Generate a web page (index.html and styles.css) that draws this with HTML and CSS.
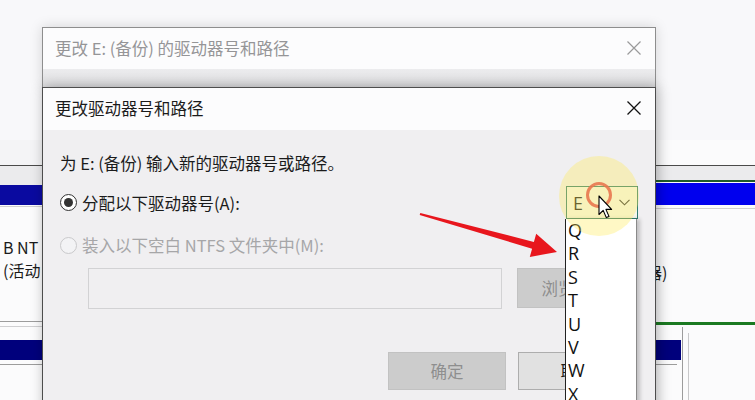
FILE: index.html
```html
<!DOCTYPE html>
<html lang="zh-CN">
<head>
    <meta charset="UTF-8">
    <meta name="viewport" content="width=device-width, initial-scale=1.0">
    <title>更改驱动器号和路径</title>
    <link rel="stylesheet" href="styles.css">
</head>
<body>
    <div class="desktop">

        <!-- Disk Management window behind the dialogs -->
        <div class="disk disk-left">
            <div class="head"></div>
            <div class="rule dark"></div>
            <div class="lane"></div>
            <div class="band navy"></div>
            <div class="rule pale gap1"></div>
            <div class="vol">B NT<br>(活动</div>
            <div class="rule grey"></div>
            <div class="rule pale gap4"></div>
            <div class="band deep gap13"></div>
            <div class="rule grey gap4"></div>
        </div>

        <div class="disk disk-right">
            <div class="head"></div>
            <div class="rule dark"></div>
            <div class="lane short"></div>
            <div class="rule green"></div>
            <div class="band blue gap1"></div>
            <div class="rule pale gap3"></div>
            <div class="vol cut">器)</div>
            <div class="rule green thick"></div>
            <div class="part-row">
                <div class="part">
                    <div class="band deep"></div>
                    <div class="rule grey gap4"></div>
                </div>
                <div class="vline"></div>
                <div class="vline light"></div>
            </div>
        </div>

        <!-- Parent dialog -->
        <div class="dialog dialog-back">
            <div class="titlebar">
                <span class="title">更改 E: (备份) 的驱动器号和路径</span>
                <svg class="close" width="14" height="14" viewBox="0 0 14 14">
                    <path d="M0.5 0.5 L13.5 13.5 M13.5 0.5 L0.5 13.5" stroke="#9a9a9a" stroke-width="1.2" fill="none"/>
                </svg>
            </div>
            <div class="back-body"></div>
        </div>

        <!-- Change drive letter dialog -->
        <div class="dialog dialog-front">
            <div class="titlebar">
                <span class="title">更改驱动器号和路径</span>
                <svg class="close" width="14" height="14" viewBox="0 0 14 14">
                    <path d="M0.5 0.5 L13.5 13.5 M13.5 0.5 L0.5 13.5" stroke="#111" stroke-width="1.3" fill="none"/>
                </svg>
            </div>
            <div class="dialog-body">
                <p class="intro">为 E: (备份) 输入新的驱动器号或路径。</p>

                <div class="choice">
                    <label class="option">
                        <span class="radio checked"><span class="dot"></span></span>
                        分配以下驱动器号(A):
                    </label>
                    <div class="combo">
                        <span>E</span>
                        <svg width="11" height="7" viewBox="0 0 11 7">
                            <path d="M0.5 0.8 L5.5 5.8 L10.5 0.8" stroke="#333" stroke-width="1.1" fill="none"/>
                        </svg>
                    </div>
                </div>

                <div class="choice disabled">
                    <label class="option">
                        <span class="radio"></span>
                        装入以下空白 NTFS 文件夹中(M):
                    </label>
                </div>

                <div class="path-row">
                    <div class="path-box"></div>
                    <button class="btn off">浏览(B)...</button>
                </div>

                <div class="actions">
                    <button class="btn off">确定</button>
                    <button class="btn">取消</button>
                </div>
            </div>
        </div>

        <!-- Open drop-down list -->
        <ul class="letter-list">
            <li>Q</li>
            <li>R</li>
            <li>S</li>
            <li>T</li>
            <li>U</li>
            <li>V</li>
            <li>W</li>
            <li>X</li>
        </ul>

        <!-- Screen recording marks: highlight, click ring, pointer, arrow -->
        <div class="spot"></div>
        <svg class="ring" width="32" height="32" viewBox="0 0 32 32">
            <circle cx="16" cy="16" r="11.5" stroke="#e8774f" stroke-width="3" fill="none" opacity="0.9"/>
        </svg>
        <svg class="pointer" width="16" height="26" viewBox="0 0 16 26">
            <path d="M1 1 V19.5 L5.2 15.4 L8.3 22.6 L11 21.4 L7.9 14.4 H13.6 Z" fill="#fff" stroke="#000" stroke-width="1.1" stroke-linejoin="round"/>
        </svg>
        <svg class="arrow" width="150" height="60" viewBox="0 0 150 60">
            <polygon points="5.3,8 118.9,36.9 121.2,28.7 142,47 114.8,51.9 117.1,43.7 4.7,10" fill="#e8161d"/>
        </svg>
    </div>
</body>
</html>
```

FILE: styles.css
```css
/* General */
* {
    box-sizing: border-box;
}

body {
    margin: 0;
    width: 755px;
    height: 400px;
    overflow: hidden;
    background: #f8f8fa;
    font-family: "Noto Sans CJK SC", "Noto Sans", sans-serif;
    color: #1b1b1b;
}

.desktop {
    position: relative;
    width: 755px;
    height: 400px;
    overflow: hidden;
}

/* Disk Management strips */
.disk {
    position: absolute;
    top: 140px;
    height: 260px;
    background: #fbfbfc;
    overflow: hidden;
}

.disk-left {
    left: 0;
    width: 43px;
}

.disk-right {
    left: 655px;
    width: 100px;
}

.disk .head {
    height: 25px;
    background: #f4f4f6;
}

.disk-right .head {
    background: #fbfbfc;
}

.rule {
    height: 1px;
}

.rule.dark { background: #4a4a4a; }
.rule.grey { background: #9c9c9c; }
.rule.pale { background: #cfcfd1; }
.rule.green { height: 2px; background: #1f5d2a; }
.rule.green.thick { height: 3px; background: #1b7a22; }

.gap1 { margin-top: 1px; }
.gap3 { margin-top: 3px; }
.gap4 { margin-top: 4px; }
.gap13 { margin-top: 13px; }

.lane {
    height: 19px;
    background: #ebebed;
}

.lane.short {
    height: 14px;
}

.band {
    height: 20px;
}

.band.navy { background: #0a0aa0; }
.band.deep { background: #00007c; }
.band.blue { height: 22px; background: #0000ee; }

.vol {
    height: 114px;
    padding: 29px 0 0 3px;
    font-size: 16px;
    line-height: 23px;
    white-space: nowrap;
    color: #1b1b1b;
}

.vol.cut {
    height: 113px;
    padding: 52px 0 0 0;
    text-indent: -9px;
}

.part-row {
    display: flex;
    height: 80px;
    margin-top: 2px;
}

.part {
    width: 26px;
    padding-top: 13px;
}

.part .rule {
    width: 22px;
}

.vline {
    width: 1px;
    margin-left: 1px;
    background: #9c9c9c;
}

.vline.light {
    margin: 6px 0 0 5px;
    background: #c8c8ca;
}

/* Dialogs */
.dialog {
    position: absolute;
    left: 42px;
    width: 614px;
    background: #fcfcfd;
}

.dialog-back {
    top: 27px;
    height: 61px;
    border: 1px solid #8e8e8e;
    border-bottom: none;
    box-shadow: 0 0 12px rgba(0, 0, 0, 0.15);
}

.dialog-front {
    top: 87px;
    height: 330px;
    display: flex;
    flex-direction: column;
    border: 1px solid #4d4d4d;
    box-shadow: 2px 0 12px rgba(0, 0, 0, 0.3);
}

.titlebar {
    display: flex;
    align-items: center;
    justify-content: space-between;
    height: 42px;
    padding: 0 14px 3px 12px;
    flex-shrink: 0;
}

.dialog-back .titlebar {
    height: 41px;
    padding-bottom: 2px;
}

.title {
    font-size: 16.5px;
    line-height: 22px;
}

.dialog-back .title {
    color: #959597;
}

.back-body {
    height: 19px;
    background: linear-gradient(#ececee, #dddddf);
}

.dialog-body {
    flex: 1;
    background: #f0eff1;
    padding: 22px 17px 0 17px;
    font-size: 16.5px;
}

.intro {
    margin: 0;
    line-height: 22px;
}

.choice {
    display: flex;
    align-items: center;
    justify-content: space-between;
    height: 33px;
    margin-top: 12px;
}

.choice.disabled {
    height: 22px;
    margin-top: 15px;
    color: #a6a6a8;
}

.option {
    display: flex;
    align-items: center;
    gap: 5px;
    line-height: 22px;
}

.radio {
    display: flex;
    align-items: center;
    justify-content: center;
    width: 17px;
    height: 17px;
    border-radius: 50%;
    border: 1.5px solid #c9c9cb;
    background: #f3f3f5;
}

.radio.checked {
    border-color: #333;
    background: #fff;
}

.radio .dot {
    width: 9px;
    height: 9px;
    border-radius: 50%;
    background: #333;
}

.combo {
    display: flex;
    align-items: center;
    justify-content: space-between;
    width: 72px;
    height: 33px;
    padding: 0 7px 0 6px;
    border: 1px solid #2f7d70;
    background: #f4f6ee;
    font-family: "Open Sans", "Noto Sans", sans-serif;
    font-size: 18px;
}

.path-row {
    display: flex;
    gap: 15px;
    margin-top: 12px;
    padding-left: 28px;
}

.path-box {
    width: 414px;
    height: 41px;
    border: 1px solid #d2d2d4;
    background: #f0eff1;
}

.btn {
    width: 118px;
    height: 38px;
    border: 1px solid #adadad;
    background: #e1e1e1;
    font-family: "Noto Sans CJK SC", "Noto Sans", sans-serif;
    font-size: 16.5px;
    color: #1b1b1b;
    padding: 0;
}

.path-row .btn {
    height: 40px;
}

.btn.off {
    border-color: #c2c2c2;
    background: #cccccc;
    color: #8e8e8e;
}

.actions {
    display: flex;
    justify-content: flex-end;
    gap: 12px;
    margin-top: 43px;
    padding-right: 2px;
}

/* Drop-down list */
.letter-list {
    position: absolute;
    left: 565px;
    top: 219px;
    width: 72px;
    height: 200px;
    margin: 0;
    padding: 0 0 0 2px;
    list-style: none;
    background: #fff;
    border-left: 1px solid #222;
    border-right: 1px solid #8a8a8a;
    box-shadow: 3px 0 4px rgba(0, 0, 0, 0.2);
    font-family: "Open Sans", "Noto Sans", sans-serif;
    font-size: 18px;
    line-height: 23.4px;
    color: #111;
}

/* Recording overlays */
.spot {
    position: absolute;
    left: 559px;
    top: 156px;
    width: 80px;
    height: 80px;
    border-radius: 50%;
    background: rgba(255, 236, 90, 0.35);
}

.ring {
    position: absolute;
    left: 583px;
    top: 179px;
}

.pointer {
    position: absolute;
    left: 598px;
    top: 195px;
}

.arrow {
    position: absolute;
    left: 415px;
    top: 205px;
}
```
